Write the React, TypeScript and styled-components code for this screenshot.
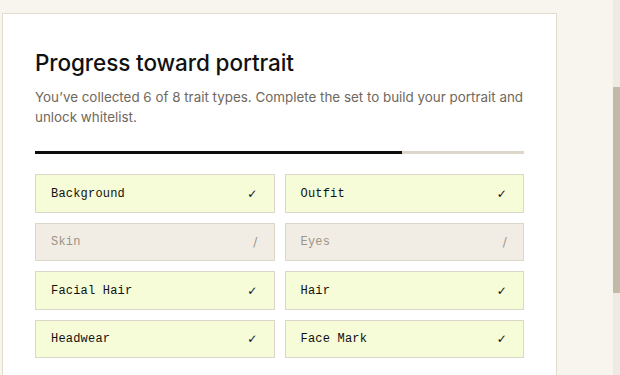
import React from "react";
import styled, { createGlobalStyle } from "styled-components";

const GlobalStyle = createGlobalStyle`
  html, body {
    margin: 0;
    padding: 0;
    background: #f8f5ef;
  }
`;

const Page = styled.div`
  padding: 13px 63px 40px 2px;
`;

const ScrollRail = styled.div`
  position: fixed;
  top: 0;
  right: 0;
  width: 7px;
  height: 100vh;
  background: #efebe3;
`;

const ScrollThumb = styled.div`
  position: absolute;
  left: 0;
  right: 0;
  top: 87px;
  height: 206px;
  background: #c2baa8;
`;

const Card = styled.section`
  background: #fff;
  border: 1px solid #e2dccf;
  padding: 36px 32px 36px;
`;

const Title = styled.h2`
  font-family: "Inter", "Noto Sans", sans-serif;
  font-size: 22.5px;
  font-weight: 500;
  letter-spacing: -0.1px;
  line-height: 26px;
  color: #111;
  margin: 0 0 11px;
`;

const Lead = styled.p`
  font-family: "Inter", "Noto Sans", sans-serif;
  font-size: 13.4px;
  line-height: 20px;
  color: #6f685c;
  margin: 0;
`;

const Track = styled.div`
  height: 3px;
  background: #dcd6cb;
  margin: 24px 0 20px;
`;

const Fill = styled.div`
  height: 100%;
  background: #0d0d0d;
`;

const Grid = styled.ul`
  list-style: none;
  margin: 0;
  padding: 0;
  display: grid;
  grid-template-columns: 1fr 1fr;
  grid-auto-rows: 38.5px;
  gap: 10px;
`;

const Trait = styled.li<{ $done: boolean }>`
  display: flex;
  align-items: center;
  justify-content: space-between;
  box-sizing: border-box;
  padding: 1px 16px 0 15px;
  border: 1px solid #dcd7c9;
  background: ${p => (p.$done ? "#f6fbd8" : "#f1ede5")};
  color: ${p => (p.$done ? "#111" : "#9c9484")};
  font-family: "Liberation Mono", "DejaVu Sans Mono", monospace;
  font-size: 12px;
  letter-spacing: 0.2px;
`;

const Mark = styled.span`
  font-family: "DejaVu Sans", sans-serif;
  font-size: 12px;
`;

const traits = [
  { name: "Background", done: true },
  { name: "Outfit", done: true },
  { name: "Skin", done: false },
  { name: "Eyes", done: false },
  { name: "Facial Hair", done: true },
  { name: "Hair", done: true },
  { name: "Headwear", done: true },
  { name: "Face Mark", done: true },
];

export default function App() {
  const collected = traits.filter(t => t.done).length;
  const lead = `You’ve collected ${collected} of ${traits.length} trait types. Complete the set to build your portrait and unlock whitelist.`;

  return (
    <>
      <GlobalStyle />
      <Page>
        <Card>
          <Title>Progress toward portrait</Title>
          <Lead>{lead}</Lead>
          <Track>
            <Fill style={{ width: `${(collected / traits.length) * 100}%` }} />
          </Track>
          <Grid>
            {traits.map(t => (
              <Trait key={t.name} $done={t.done}>
                {t.name}
                <Mark>{t.done ? "✓" : "/"}</Mark>
              </Trait>
            ))}
          </Grid>
        </Card>
      </Page>
      <ScrollRail>
        <ScrollThumb />
      </ScrollRail>
    </>
  );
}
